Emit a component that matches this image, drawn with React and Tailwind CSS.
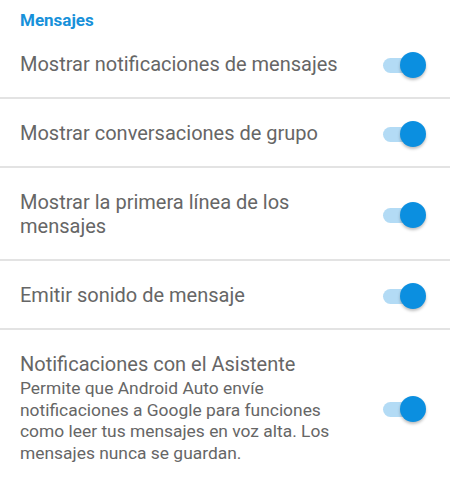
import React from 'react';

function Toggle() {
  return (
    <div className="relative w-[43px] h-[26px] shrink-0 mr-[24px] mt-[3px]">
      <div className="absolute left-0 top-[6px] w-[36px] h-[15px] rounded-full bg-[#b3dbf5]" />
      <div className="absolute right-0 top-0 w-[26px] h-[26px] rounded-full bg-[#0b8fe0] shadow-[0_2px_3px_rgba(0,0,0,0.25)]" />
    </div>
  );
}

function Row({ children, last }) {
  return (
    <div className={`flex items-center justify-between pl-[20px] ${last ? '' : 'border-b-2 border-[#e3e3e3]'}`}>
      <div className="flex-1 pr-4">{children}</div>
      <Toggle />
    </div>
  );
}

export default function App() {
  const text = 'text-[20px] leading-[24px] text-[#666666]';
  return (
    <div className="w-[450px] h-[483px] bg-white overflow-hidden" style={{ fontFamily: 'Roboto, "Noto Sans", sans-serif' }}>
      <div className="pl-[20px] pt-[10px] text-[17px] leading-[20px] font-bold text-[#1791da]">
        Mensajes
      </div>

      <Row>
        <div className={`${text} py-[21.5px]`}>Mostrar notificaciones de mensajes</div>
      </Row>
      <Row>
        <div className={`${text} py-[21.5px]`}>Mostrar conversaciones de grupo</div>
      </Row>
      <Row>
        <div className={`${text} py-[21.5px] max-w-[300px]`}>Mostrar la primera línea de los mensajes</div>
      </Row>
      <Row>
        <div className={`${text} py-[21.5px]`}>Emitir sonido de mensaje</div>
      </Row>
      <Row last>
        <div className="pt-[22px] pb-[20px]">
          <div className={text}>Notificaciones con el Asistente</div>
          <div className="text-[17.4px] leading-[21.7px] text-[#666666] max-w-[330px] mt-[2px]">
            Permite que Android Auto envíe notificaciones a Google para funciones como leer tus mensajes en voz alta. Los mensajes nunca se guardan.
          </div>
        </div>
      </Row>
    </div>
  );
}
